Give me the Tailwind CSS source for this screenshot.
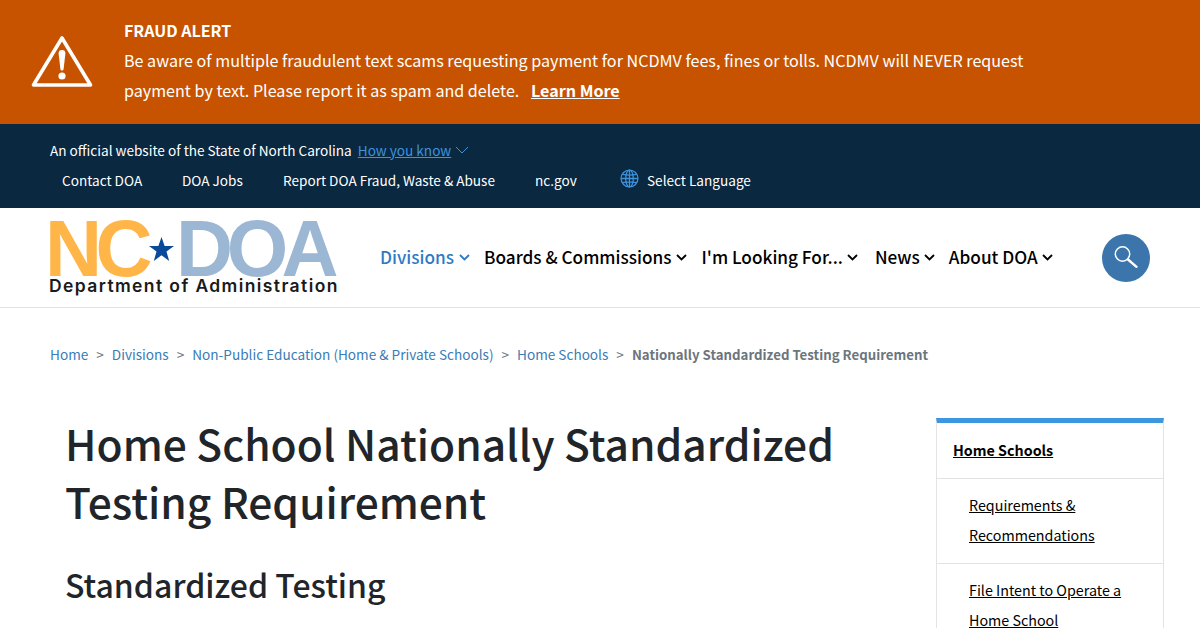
<!DOCTYPE html>
<html lang="en">
<head>
  <meta charset="UTF-8" />
  <title>Home School Nationally Standardized Testing Requirement</title>
  <script src="https://cdn.jsdelivr.net/npm/@tailwindcss/browser@4"></script>
</head>
<body class="h-[628px] overflow-hidden bg-white font-['Noto_Sans_CJK_JP',sans-serif] text-[#212529]">

  <!-- fraud alert -->
  <div class="h-[124px] bg-[#c75300] flex text-white text-[16.13px] leading-[30px]">
    <div class="w-[124px] pl-[31px] pt-[34px] shrink-0">
      <svg width="62" height="56" viewBox="0 0 62 56" fill="none">
        <path d="M31 4 L59.5 51 H2.5 Z" stroke="#fff" stroke-width="3.6" stroke-linejoin="round"/>
        <path d="M27.6 19.5 A3.4 3.4 0 0 1 34.4 19.5 L32.6 35 A1.6 1.6 0 0 1 29.4 35 Z" fill="#fff"/>
        <circle cx="31" cy="42" r="3.6" fill="#fff"/>
      </svg>
    </div>
    <div class="pt-[15px]">
      <p class="font-bold text-[16px]">FRAUD ALERT</p>
      <p class="w-[920px]">Be aware of multiple fraudulent text scams requesting payment for NCDMV fees, fines or tolls. NCDMV will NEVER request payment by text. Please report it as spam and delete. <a href="#" class="ml-2 font-bold underline">Learn More</a></p>
    </div>
  </div>

  <!-- state bar -->
  <div class="h-[84px] bg-[#0a2840] text-white text-[13.6px] leading-[30px] pt-[11px] pl-[50px]">
    <div class="flex items-center">
      <span>An official website of the State of North Carolina</span>
      <a href="#" class="ml-[6px] text-[#3f92dc] underline">How you know</a>
      <svg class="ml-[4px]" width="14" height="8" viewBox="0 0 14 8" fill="none"><path d="M1 1 L7 7 L13 1" stroke="#3f92dc" stroke-width="1"/></svg>
    </div>
    <div class="flex items-center pl-3">
      <a href="#" class="w-[120px]">Contact DOA</a>
      <a href="#" class="w-[101px]">DOA Jobs</a>
      <a href="#" class="w-[252px]">Report DOA Fraud, Waste &amp; Abuse</a>
      <a href="#" class="w-[85px]">nc.gov</a>
      <svg class="mb-[3px]" width="19" height="19" viewBox="0 0 18 18" fill="none" stroke="#3f92dc" stroke-width="1.2">
        <circle cx="9" cy="9" r="8"/>
        <ellipse cx="9" cy="9" rx="3.6" ry="8"/>
        <path d="M9 1 V17 M1 9 H17 M2.4 5 Q9 6.4 15.6 5 M2.4 13 Q9 11.6 15.6 13"/>
      </svg>
      <span class="ml-[8px]">Select Language</span>
    </div>
  </div>

  <!-- header -->
  <header class="h-[100px] border-b border-[#e3e3e3] flex items-start">
    <a href="#" class="block ml-[49px] w-[300px] pt-[12px] shrink-0">
      <div class="flex items-center h-[58px] -ml-[4px] font-['Liberation_Sans',sans-serif] font-bold text-[79px] leading-[58px] tracking-[-6.5px]">
        <span class="text-[#ffb547]">NC</span>
        <svg class="ml-[3px]" width="25" height="24" viewBox="0 0 24 23"><path d="M12 0 L15 8.5 H24 L16.8 14 L19.4 23 L12 17.6 L4.6 23 L7.2 14 L0 8.5 H9 Z" fill="#0a4a9a"/></svg>
        <span class="ml-[2px] text-[#9bb7d4]">DOA</span>
      </div>
      <div class="-mt-[1px] font-['Inter',sans-serif] font-semibold text-[17.5px] leading-[18px] tracking-[1.4px] text-[#1a1a1a] whitespace-nowrap">Department of Administration</div>
    </a>
    <nav class="flex items-center h-[97px] ml-[31px] text-[17.2px] font-medium text-black whitespace-nowrap">
      <a href="#" class="flex items-center text-[#2e7bc4]">Divisions<svg class="ml-[5px] mt-[2px]" width="11" height="7" viewBox="0 0 11 7" fill="none"><path d="M1 1 L5.5 5.5 L10 1" stroke="currentColor" stroke-width="1.8"/></svg></a>
      <a href="#" class="ml-[14px] flex items-center">Boards &amp; Commissions<svg class="ml-[4px] mt-[2px]" width="11" height="7" viewBox="0 0 11 7" fill="none"><path d="M1 1 L5.5 5.5 L10 1" stroke="currentColor" stroke-width="1.8"/></svg></a>
      <a href="#" class="ml-[15px] flex items-center">I'm Looking For...<svg class="ml-[4px] mt-[2px]" width="11" height="7" viewBox="0 0 11 7" fill="none"><path d="M1 1 L5.5 5.5 L10 1" stroke="currentColor" stroke-width="1.8"/></svg></a>
      <a href="#" class="ml-[17px] flex items-center">News<svg class="ml-[4px] mt-[2px]" width="11" height="7" viewBox="0 0 11 7" fill="none"><path d="M1 1 L5.5 5.5 L10 1" stroke="currentColor" stroke-width="1.8"/></svg></a>
      <a href="#" class="ml-[14px] flex items-center">About DOA<svg class="ml-[4px] mt-[2px]" width="11" height="7" viewBox="0 0 11 7" fill="none"><path d="M1 1 L5.5 5.5 L10 1" stroke="currentColor" stroke-width="1.8"/></svg></a>
    </nav>
    <button class="ml-auto mr-[50px] mt-[26px] w-12 h-12 rounded-full bg-[#3b75ab] flex items-center justify-center">
      <svg width="24" height="24" viewBox="0 0 24 24" fill="none" stroke="#fff"><circle cx="8.5" cy="8" r="7.2" stroke-width="1.5"/><path d="M14 13.5 L22.5 20.8" stroke-width="2.4" stroke-linecap="round"/></svg>
    </button>
  </header>

  <!-- breadcrumb -->
  <div class="flex items-center h-[24px] mt-[34px] pl-[50px] text-[13.6px] text-[#3a7cb5]">
    <a href="#">Home</a><span class="mx-[8px] text-[#6c757d]">&gt;</span>
    <a href="#">Divisions</a><span class="mx-[8px] text-[#6c757d]">&gt;</span>
    <a href="#">Non-Public Education (Home &amp; Private Schools)</a><span class="mx-[8px] text-[#6c757d]">&gt;</span>
    <a href="#">Home Schools</a><span class="mx-[8px] text-[#6c757d]">&gt;</span>
    <span class="font-bold text-[13.25px] pt-[1px] text-[#6c757d]">Nationally Standardized Testing Requirement</span>
  </div>

  <!-- main -->
  <div class="flex mt-[52px]">
    <main class="w-[936px] shrink-0 pl-[65px]">
      <h1 class="text-[42.5px] leading-[58px] font-medium -mt-[4px]">Home School Nationally Standardized Testing Requirement</h1>
      <h2 class="text-[32px] leading-[40px] font-medium mt-[34px]">Standardized Testing</h2>
    </main>
    <aside class="w-[228px] h-[300px] border-x border-[#e3e3e3] border-t-[5px] border-t-[#3d96e0] text-[14.3px] leading-[30px] text-black">
      <div class="h-[56px] pt-[12px] pl-4 font-bold underline border-b border-[#e3e3e3]">Home Schools</div>
      <div class="h-[85px] pt-[11px] pl-8 underline border-b border-[#e3e3e3]">Requirements &amp;<br>Recommendations</div>
      <div class="pt-[11px] pl-8 underline">File Intent to Operate a<br>Home School</div>
    </aside>
  </div>
</body>
</html>
